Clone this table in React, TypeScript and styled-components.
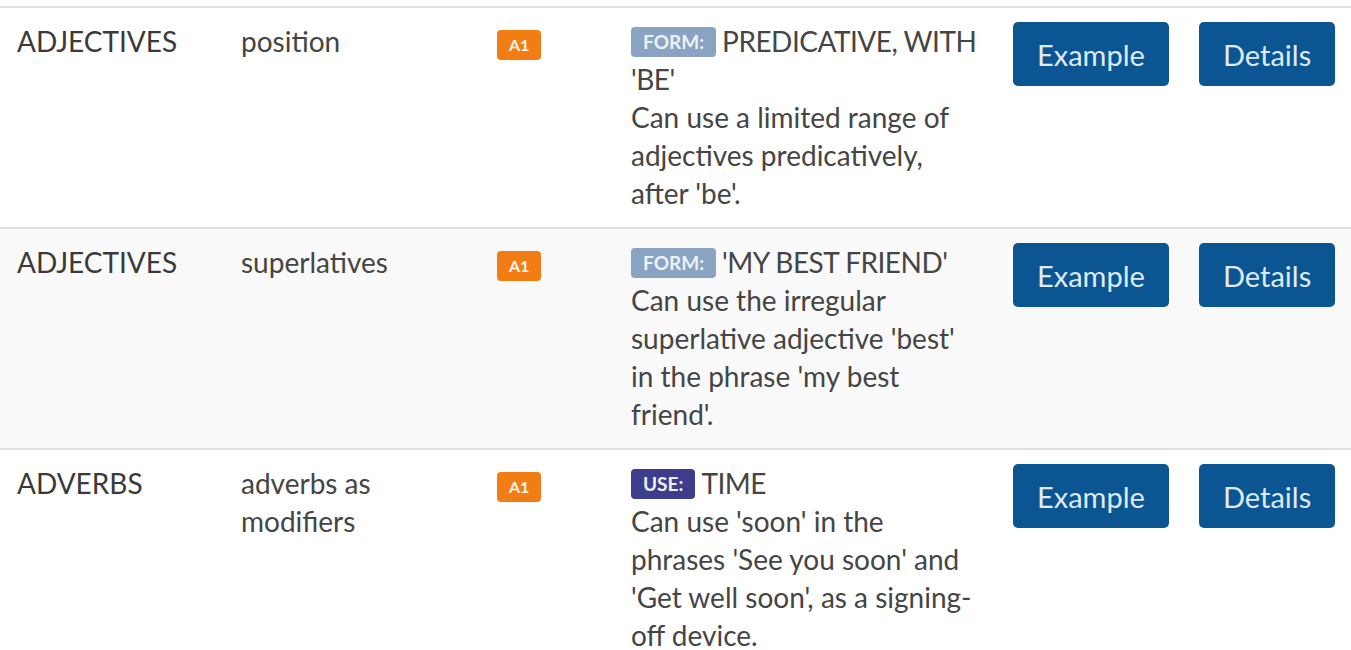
import React from "react";
import styled, { createGlobalStyle } from "styled-components";

type Row = {
  category: string;
  guideword: string;
  level: string;
  kind: "FORM" | "USE";
  title: string;
  text: string;
};

const rows: Row[] = [
  {
    category: "ADJECTIVES",
    guideword: "position",
    level: "A1",
    kind: "FORM",
    title: "PREDICATIVE, WITH 'BE'",
    text: "Can use a limited range of adjectives predicatively, after 'be'.",
  },
  {
    category: "ADJECTIVES",
    guideword: "superlatives",
    level: "A1",
    kind: "FORM",
    title: "'MY BEST FRIEND'",
    text: "Can use the irregular superlative adjective 'best' in the phrase 'my best friend'.",
  },
  {
    category: "ADVERBS",
    guideword: "adverbs as modifiers",
    level: "A1",
    kind: "USE",
    title: "TIME",
    text: "Can use 'soon' in the phrases 'See you soon' and 'Get well soon', as a signing-off device.",
  },
];

const GlobalStyle = createGlobalStyle`
  body {
    margin: 0;
    background: #ffffff;
    font-family: Lato, "Open Sans", sans-serif;
    color: #444444;
  }
`;

const Page = styled.div`
  padding-top: 6px;
  overflow: hidden;
  height: 644px;
`;

const Table = styled.table`
  width: 1351px;
  border-collapse: collapse;
  table-layout: fixed;
`;

const Tr = styled.tr<{ $striped?: boolean }>`
  background: ${({ $striped }) => ($striped ? "#f9f9f9" : "#ffffff")};
  border-top: 2px solid #dedede;
`;

const Td = styled.td<{ $width: number; $left?: number; $right?: number }>`
  box-sizing: border-box;
  width: ${({ $width }) => $width}px;
  padding: 14px ${({ $right }) => $right ?? 16}px 15px
    ${({ $left }) => $left ?? 16}px;
  vertical-align: top;
  font-size: 28px;
  line-height: 38px;
  color: #454545;
`;

const Category = styled.span`
  color: #3a3a3a;
`;

const Level = styled.span`
  display: inline-block;
  margin-top: 8px;
  padding: 0 12px;
  height: 30px;
  line-height: 30px;
  border-radius: 4px;
  background: #f27d14;
  color: #fff6ee;
  font-size: 16px;
  font-weight: 700;
  vertical-align: top;
`;

const Kind = styled.span<{ $kind: "FORM" | "USE" }>`
  display: inline-block;
  height: 30px;
  line-height: 30px;
  padding: 0 12px;
  margin-right: 6px;
  border-radius: 4px;
  background: ${({ $kind }) => ($kind === "FORM" ? "#8aa3c2" : "#3e3d8c")};
  color: #eef2f8;
  font-size: 19px;
  font-weight: 700;
  letter-spacing: 0;
  vertical-align: 3px;
`;

const Title = styled.span`
  letter-spacing: -0.5px;
`;

const Button = styled.button`
  display: block;
  height: 64px;
  padding: 0 24px;
  border: none;
  border-radius: 5px;
  background: #0b5592;
  color: #dfeaf4;
  font-family: Lato, "Open Sans", sans-serif;
  font-size: 29px;
  cursor: pointer;
`;

export default function App() {
  return (
    <>
      <GlobalStyle />
      <Page>
        <Table>
          <tbody>
            {rows.map((r, i) => (
              <Tr key={i} $striped={i % 2 === 1}>
                <Td $width={225} $left={17}>
                  <Category>{r.category}</Category>
                </Td>
                <Td $width={256}>{r.guideword}</Td>
                <Td $width={134}>
                  <Level>{r.level}</Level>
                </Td>
                <Td $width={382} $right={18}>
                  <Kind $kind={r.kind}>{r.kind}:</Kind>
                  <Title>{r.title}</Title>
                  <br />
                  {r.text}
                </Td>
                <Td $width={186}>
                  <Button>Example</Button>
                </Td>
                <Td $width={168}>
                  <Button>Details</Button>
                </Td>
              </Tr>
            ))}
          </tbody>
        </Table>
      </Page>
    </>
  );
}
